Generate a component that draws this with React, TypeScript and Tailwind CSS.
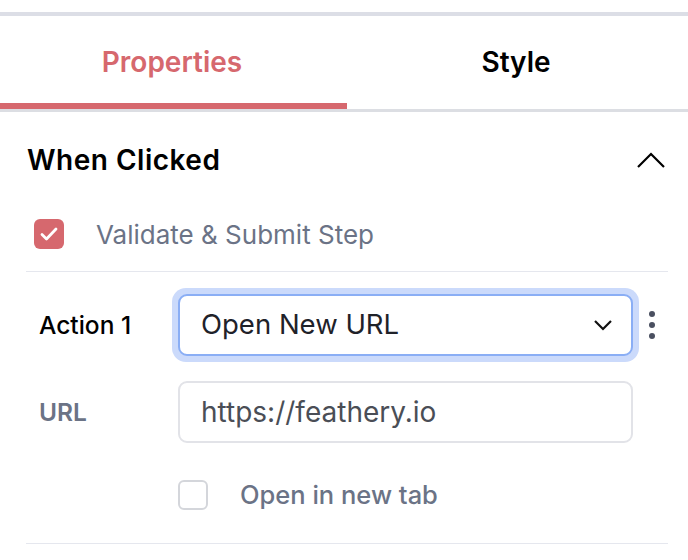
import React from "react";

export default function App() {
  const font = { fontFamily: "Inter, 'Noto Sans', sans-serif" };
  return (
    <div className="w-[688px] h-[560px] bg-white overflow-hidden" style={font}>
      <div className="h-[12px]" />
      <div className="h-[4px] bg-[#dcdee6]" />
      <div className="flex h-[87px]">
        <div className="flex-1 flex items-center justify-center pt-[4px] text-[28px] font-semibold text-[#d6686e]">
          Properties
        </div>
        <div className="flex-1 flex items-center justify-center pt-[4px] text-[28px] font-semibold text-black">
          Style
        </div>
      </div>
      <div className="flex h-[6px]">
        <div className="w-[347px] bg-[#d6686e]" />
      </div>
      <div className="h-[3px] bg-[#dcdee3]" />

      <div className="pl-[26px] pr-[20px]">
        <div className="flex items-center justify-between h-[96px] pl-[1px]">
          <div className="text-[28px] tracking-[0.5px] font-semibold text-black">When Clicked</div>
          <svg width="30" height="18" viewBox="0 0 30 18" className="mr-[2px]">
            <path d="M2 16 L15 3 L28 16" fill="none" stroke="black" strokeWidth="2.2" />
          </svg>
        </div>
        <div className="flex items-center h-[52px] pl-[8px]">
          <div className="w-[30px] h-[30px] rounded-[6px] bg-[#d6686e] flex items-center justify-center">
            <svg width="18" height="14" viewBox="0 0 18 14">
              <path d="M2 7.5 L6.5 12 L16 2" fill="none" stroke="white" strokeWidth="2.8" strokeLinecap="round" strokeLinejoin="round" />
            </svg>
          </div>
          <div className="ml-[32px] text-[26px] text-[#6b7386]">Validate &amp; Submit Step</div>
        </div>
        <div className="mt-[11px] h-[1px] bg-[#e5e7ee]" />

        <div className="flex items-center mt-[16px] h-[74px]">
          <div className="w-[146px] pl-[13px] text-[24.5px] text-black font-medium">Action 1</div>
          <div className="w-[467px] h-[74px] rounded-[14px] bg-[#cbdafb] p-[6px]">
            <div className="h-full rounded-[9px] border-2 border-[#8aaef5] bg-white flex items-center justify-between pl-[21px] pr-[18px]">
              <span className="text-[27.5px] text-[#1f2229]">Open New URL</span>
              <svg width="20" height="12" viewBox="0 0 20 12">
                <path d="M2 2 L10 10 L18 2" fill="none" stroke="#111" strokeWidth="2.2" />
              </svg>
            </div>
          </div>
          <div className="ml-[10px] flex flex-col gap-[5px]">
            <div className="w-[6px] h-[6px] rounded-full bg-[#4a5060]" />
            <div className="w-[6px] h-[6px] rounded-full bg-[#4a5060]" />
            <div className="w-[6px] h-[6px] rounded-full bg-[#4a5060]" />
          </div>
        </div>

        <div className="flex items-center mt-[19px] h-[62px]">
          <div className="w-[152px] pl-[13px] text-[24.5px] text-[#6b7386] font-semibold">URL</div>
          <div className="w-[455px] h-[62px] rounded-[9px] border-2 border-[#e2e3e8] bg-white flex items-center pl-[21px]">
            <span className="text-[28px] text-[#4a4e56]">https://feathery.io</span>
          </div>
        </div>

        <div className="flex items-center mt-[37px] h-[30px] pl-[152px]">
          <div className="w-[30px] h-[30px] rounded-[6px] border-2 border-[#d4d6db] bg-white" />
          <div className="ml-[32px] text-[25.5px] leading-[30px] text-[#6b7386] font-medium">Open in new tab</div>
        </div>
        <div className="mt-[33px] h-[1px] bg-[#e5e7ee]" />
      </div>
    </div>
  );
}
